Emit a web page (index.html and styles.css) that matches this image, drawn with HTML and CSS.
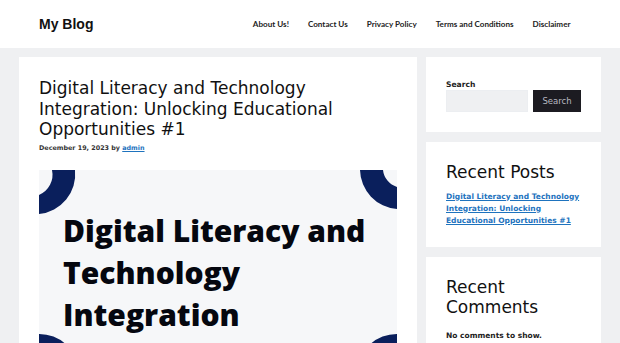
FILE: index.html
```html
<!DOCTYPE html>
<html lang="en">
<head>
    <meta charset="UTF-8">
    <meta name="viewport" content="width=device-width, initial-scale=1.0">
    <title>My Blog</title>
    <link rel="stylesheet" href="styles.css">
</head>
<body>
    <header class="site-header">
        <div class="site-logo">My Blog</div>
        <nav class="main-nav">
            <a href="#">About Us!</a>
            <a href="#">Contact Us</a>
            <a href="#">Privacy Policy</a>
            <a href="#">Terms and Conditions</a>
            <a href="#">Disclaimer</a>
        </nav>
    </header>

    <div class="site-content">
        <main class="post">
            <h1 class="post-title">Digital Literacy and Technology Integration: Unlocking Educational Opportunities #1</h1>
            <div class="post-meta">December 19, 2023 by <a href="#">admin</a></div>

            <div class="featured-image">
                <!-- decorative rings in the corners of the picture -->
                <svg class="rings" viewBox="0 0 358 200" preserveAspectRatio="none">
                    <path d="M36 0 A40 40 0 0 1 0 44 L0 25 A22 22 0 0 0 13 0 Z" fill="#0a1f5c"/>
                    <path d="M321 0 A40 40 0 0 0 358 39 L358 17 A20 20 0 0 1 344 0 Z" fill="#0a1f5c"/>
                    <path d="M0 164 A40 40 0 0 1 40 200 L16 200 A18 18 0 0 0 0 184 Z" fill="#0a1f5c"/>
                    <path d="M358 164 A40 40 0 0 0 318 200 L340 200 A18 18 0 0 1 358 184 Z" fill="#0a1f5c"/>
                </svg>
                <div class="image-text">Digital Literacy and Technology Integration</div>
            </div>
        </main>

        <aside class="sidebar">
            <section class="widget">
                <label class="search-label" for="s">Search</label>
                <div class="search-row">
                    <input type="text" id="s" class="search-input">
                    <button class="search-button">Search</button>
                </div>
            </section>

            <section class="widget">
                <h2 class="widget-title">Recent Posts</h2>
                <a href="#" class="recent-link">Digital Literacy and Technology Integration: Unlocking Educational Opportunities #1</a>
            </section>

            <section class="widget">
                <h2 class="widget-title">Recent Comments</h2>
                <p class="no-comments">No comments to show.</p>
            </section>
        </aside>
    </div>
</body>
</html>
```

FILE: styles.css
```css
body {
    margin: 0;
    background: #eff0f2;
    font-family: "DejaVu Sans", sans-serif;
    color: #222;
}

a {
    color: #1e73be;
}

.site-header {
    background: #fff;
    height: 48px;
    padding: 0 40px 0 39px;
    display: flex;
    align-items: center;
    justify-content: space-between;
}

.site-logo {
    font-family: "Liberation Sans", sans-serif;
    font-weight: bold;
    font-size: 14px;
    color: #111;
}

.main-nav {
    display: flex;
}

.main-nav a {
    font-family: "Lato", sans-serif;
    font-weight: 700;
    font-size: 8.1px;
    color: #222;
    text-decoration: none;
    padding: 0 9.5px;
}

.site-content {
    display: flex;
    gap: 9px;
    padding: 9px 19px 0;
    align-items: flex-start;
}

.post {
    width: 398px;
    background: #fff;
    padding: 21px 20px 0;
    box-sizing: border-box;
}

.post-title {
    margin: 0;
    font-size: 17px;
    font-weight: normal;
    line-height: 20.5px;
    color: #111;
}

.post-meta {
    font-size: 6.4px;
    line-height: 8px;
    font-weight: bold;
    color: #333;
    margin-top: 4px;
}

.featured-image {
    position: relative;
    margin-top: 18px;
    height: 200px;
    background: #f6f7f9;
}

.rings {
    position: absolute;
    left: 0;
    top: 0;
    width: 100%;
    height: 100%;
}

.image-text {
    position: relative;
    padding: 40px 24px 0;
    font-family: "Open Sans", sans-serif;
    font-weight: 800;
    font-size: 30px;
    line-height: 42px;
    color: #05070f;
    width: 310px;
}

.sidebar {
    width: 175px;
    display: flex;
    flex-direction: column;
    gap: 10px;
}

.widget {
    background: #fff;
    padding: 20px;
}

.search-label {
    display: block;
    font-size: 7.6px;
    font-weight: bold;
    color: #222;
    margin: 3px 0 1px;
}

.search-row {
    display: flex;
    gap: 5px;
}

.search-input {
    width: 82px;
    height: 22px;
    box-sizing: border-box;
    border: 1px solid #eceef1;
    background: #eff0f2;
    padding: 0;
}

.search-button {
    width: 48px;
    height: 22px;
    border: 0;
    background: #1c1b21;
    color: #b8b8c0;
    font-family: "DejaVu Sans", sans-serif;
    font-size: 8.5px;
    padding: 0;
}

.widget-title {
    margin: 0 0 8px;
    font-size: 17px;
    font-weight: normal;
    line-height: 20.5px;
    color: #111;
}

.recent-link {
    display: block;
    font-size: 7.5px;
    font-weight: bold;
    line-height: 12px;
}

.no-comments {
    margin: 13px 0 0;
    font-size: 7.5px;
    font-weight: bold;
    color: #222;
}
```
